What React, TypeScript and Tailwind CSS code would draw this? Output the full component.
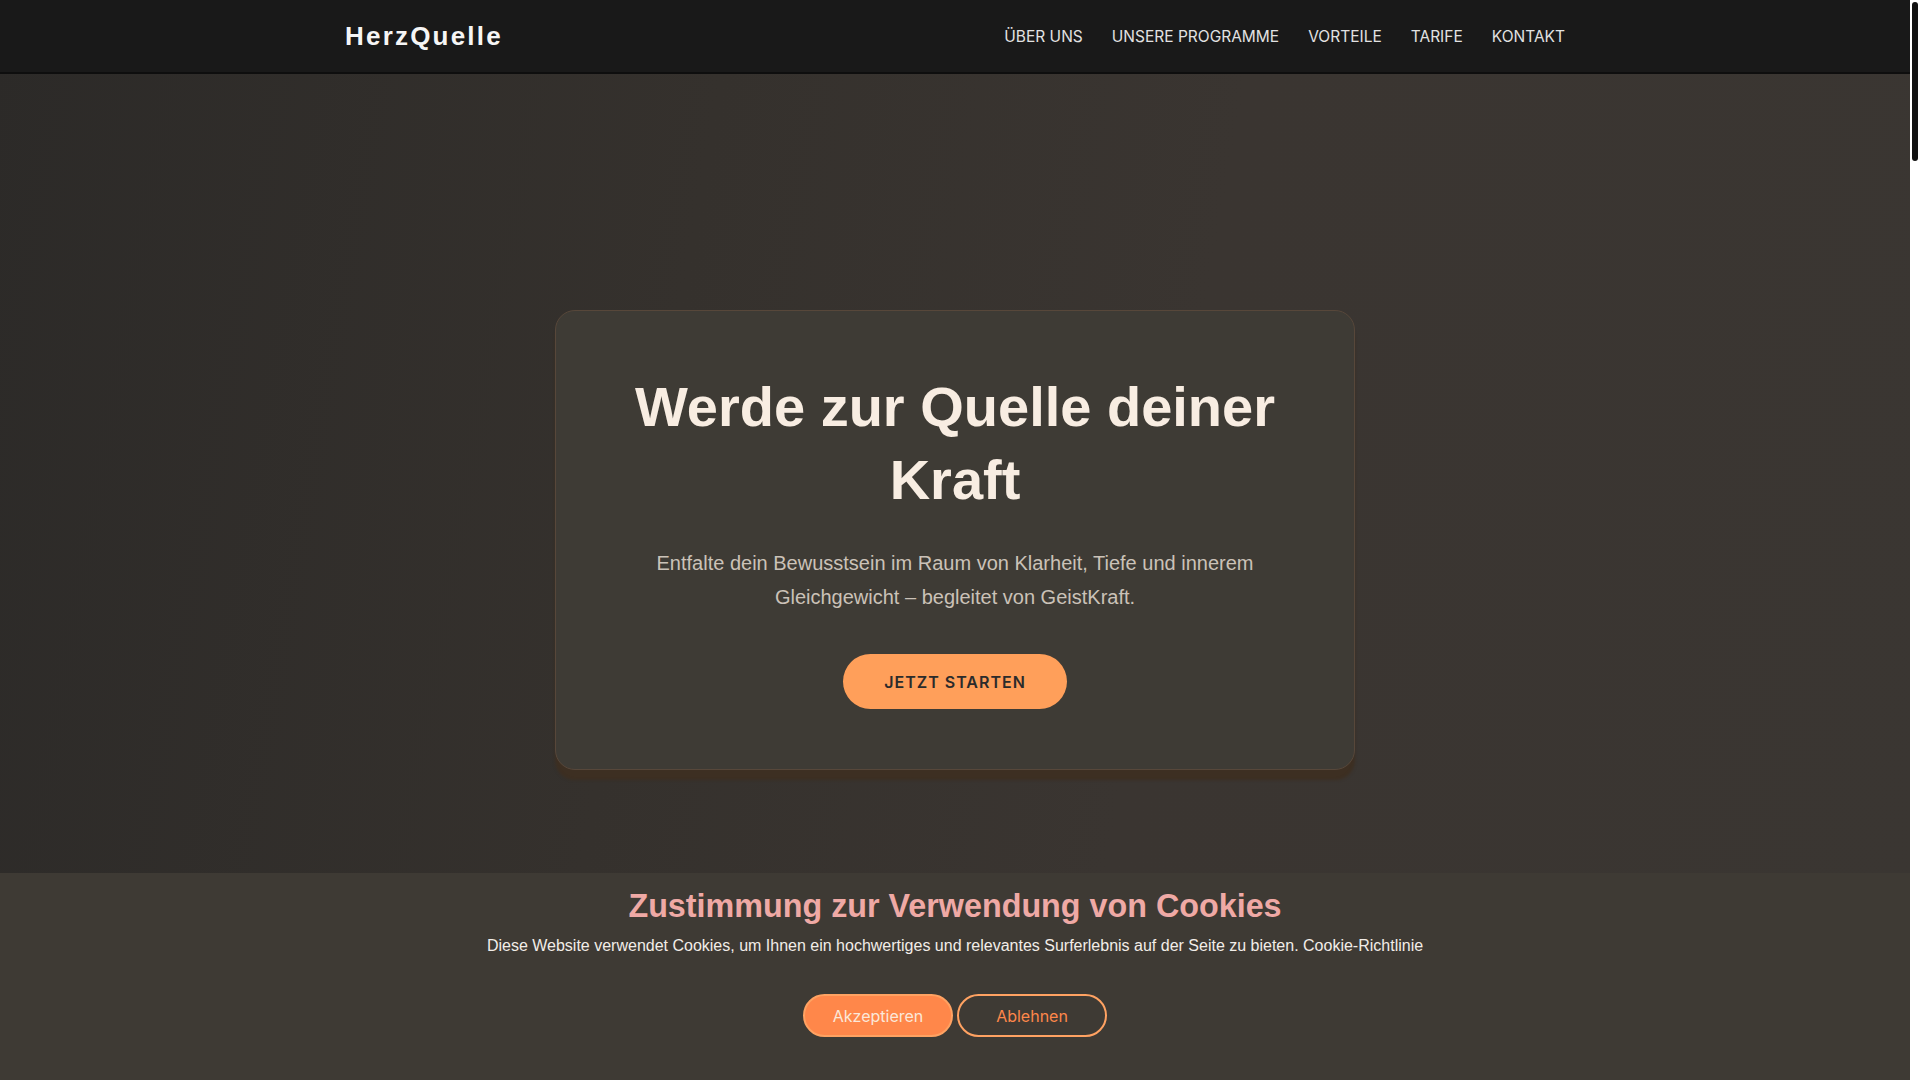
import { useLayoutEffect, useRef, useState } from 'react'

const navLinks = [
  { label: 'ÜBER UNS', href: '#ueber-uns' },
  { label: 'UNSERE PROGRAMME', href: '#programme' },
  { label: 'VORTEILE', href: '#vorteile' },
  { label: 'TARIFE', href: '#tarife' },
  { label: 'KONTAKT', href: '#kontakt' },
]

const sectionIds = ['ueber-uns', 'programme', 'vorteile', 'tarife', 'kontakt']

function Header() {
  return (
    <header className="sticky top-0 z-20 h-[74px] border-b-2 border-[#0e0e0e] bg-[#191919]">
      <div className="mx-auto flex h-full max-w-[1280px] items-center justify-between px-[30px]">
        <a href="#" className="text-[26px] font-bold tracking-[2.2px] text-[#f5f5f5]">
          HerzQuelle
        </a>
        <nav className="flex items-center gap-[29px] pt-[2px] font-['Inter',sans-serif] text-[15.5px] text-[#e2e2e2]">
          {navLinks.map((l) => (
            <a key={l.href} href={l.href}>
              {l.label}
            </a>
          ))}
        </nav>
      </div>
    </header>
  )
}

function Hero() {
  return (
    <section className="flex h-screen items-center justify-center bg-[linear-gradient(100deg,#2c2a28_0%,#35312d_35%,#3a3531_60%,#3a3632_100%)]">
      <div className="w-[800px] rounded-[20px] border border-[#57473a] bg-[#3e3b35] px-[60px] pt-[60px] pb-[60px] text-center shadow-[0_10px_3px_#3d2f22]">
        <h1 className="mb-[30px] text-[56px] font-bold leading-[1.3] text-[#f8ede2]">
          Werde zur Quelle deiner Kraft
        </h1>
        <p className="mb-10 text-[20px] leading-[34px] text-[#cbc2b8]">
          Entfalte dein Bewusstsein im Raum von Klarheit, Tiefe und innerem Gleichgewicht – begleitet von GeistKraft.
        </p>
        <a
          href="#programme"
          className="inline-flex h-[55px] items-center rounded-full bg-[#ff9f5a] px-[41px] font-['Inter',sans-serif] text-[16px] font-semibold tracking-[1px] text-[#2b2b2b]"
        >
          JETZT STARTEN
        </a>
      </div>
    </section>
  )
}

function CookieBanner() {
  return (
    <div className="fixed bottom-0 left-0 right-[10px] z-30 bg-[#3e3a34] pt-[14px] pb-[43px] text-center">
      <h2 className="text-[32.3px] font-bold leading-[1.2] text-[#efa9a5]">
        Zustimmung zur Verwendung von Cookies
      </h2>
      <p className="mt-[8.5px] text-[16px] leading-6 text-[#f2ede8]">
        Diese Website verwendet Cookies, um Ihnen ein hochwertiges und relevantes Surferlebnis auf der Seite zu bieten.{' '}
        <a href="#">Cookie-Richtlinie</a>
      </p>
      <div className="mt-[36px] flex justify-center gap-1 font-['Inter',sans-serif] text-[16px]">
        <button className="h-[43px] w-[150px] rounded-[22px] border-2 border-[#ffa262] bg-[#ff874a] text-[#fbe7d9]">
          Akzeptieren
        </button>
        <button className="h-[43px] w-[150px] rounded-[22px] border-2 border-[#ffa262] text-[#ff874a]">
          Ablehnen
        </button>
      </div>
    </div>
  )
}

export default function App() {
  const scrollRef = useRef<HTMLDivElement>(null)
  const [thumb, setThumb] = useState({ top: 0, height: 0 })

  // the site draws its own slim scrollbar next to the content
  useLayoutEffect(() => {
    const el = scrollRef.current
    if (!el) return
    const update = () => {
      const track = el.clientHeight - 4
      const height = Math.max(30, (el.clientHeight / el.scrollHeight) * track)
      const top = (el.scrollTop / (el.scrollHeight - el.clientHeight || 1)) * (track - height)
      setThumb({ top, height })
    }
    update()
    el.addEventListener('scroll', update)
    window.addEventListener('resize', update)
    return () => {
      el.removeEventListener('scroll', update)
      window.removeEventListener('resize', update)
    }
  }, [])

  return (
    <div className="flex h-screen bg-[#35312d] font-['Liberation_Sans',Arial,sans-serif]">
      <div
        ref={scrollRef}
        className="h-full flex-1 overflow-y-auto [scrollbar-width:none] [&::-webkit-scrollbar]:hidden"
      >
        <Header />
        <main className="-mt-[74px]">
          <Hero />
          {sectionIds.map((id) => (
            <section key={id} id={id} className="min-h-[1250px]" />
          ))}
        </main>
      </div>
      <div aria-hidden className="relative w-[10px] shrink-0 bg-white">
        <div
          className="absolute left-[2px] right-[2px] rounded-full bg-[#111]"
          style={{ top: thumb.top + 2, height: thumb.height }}
        />
      </div>
      <CookieBanner />
    </div>
  )
}
